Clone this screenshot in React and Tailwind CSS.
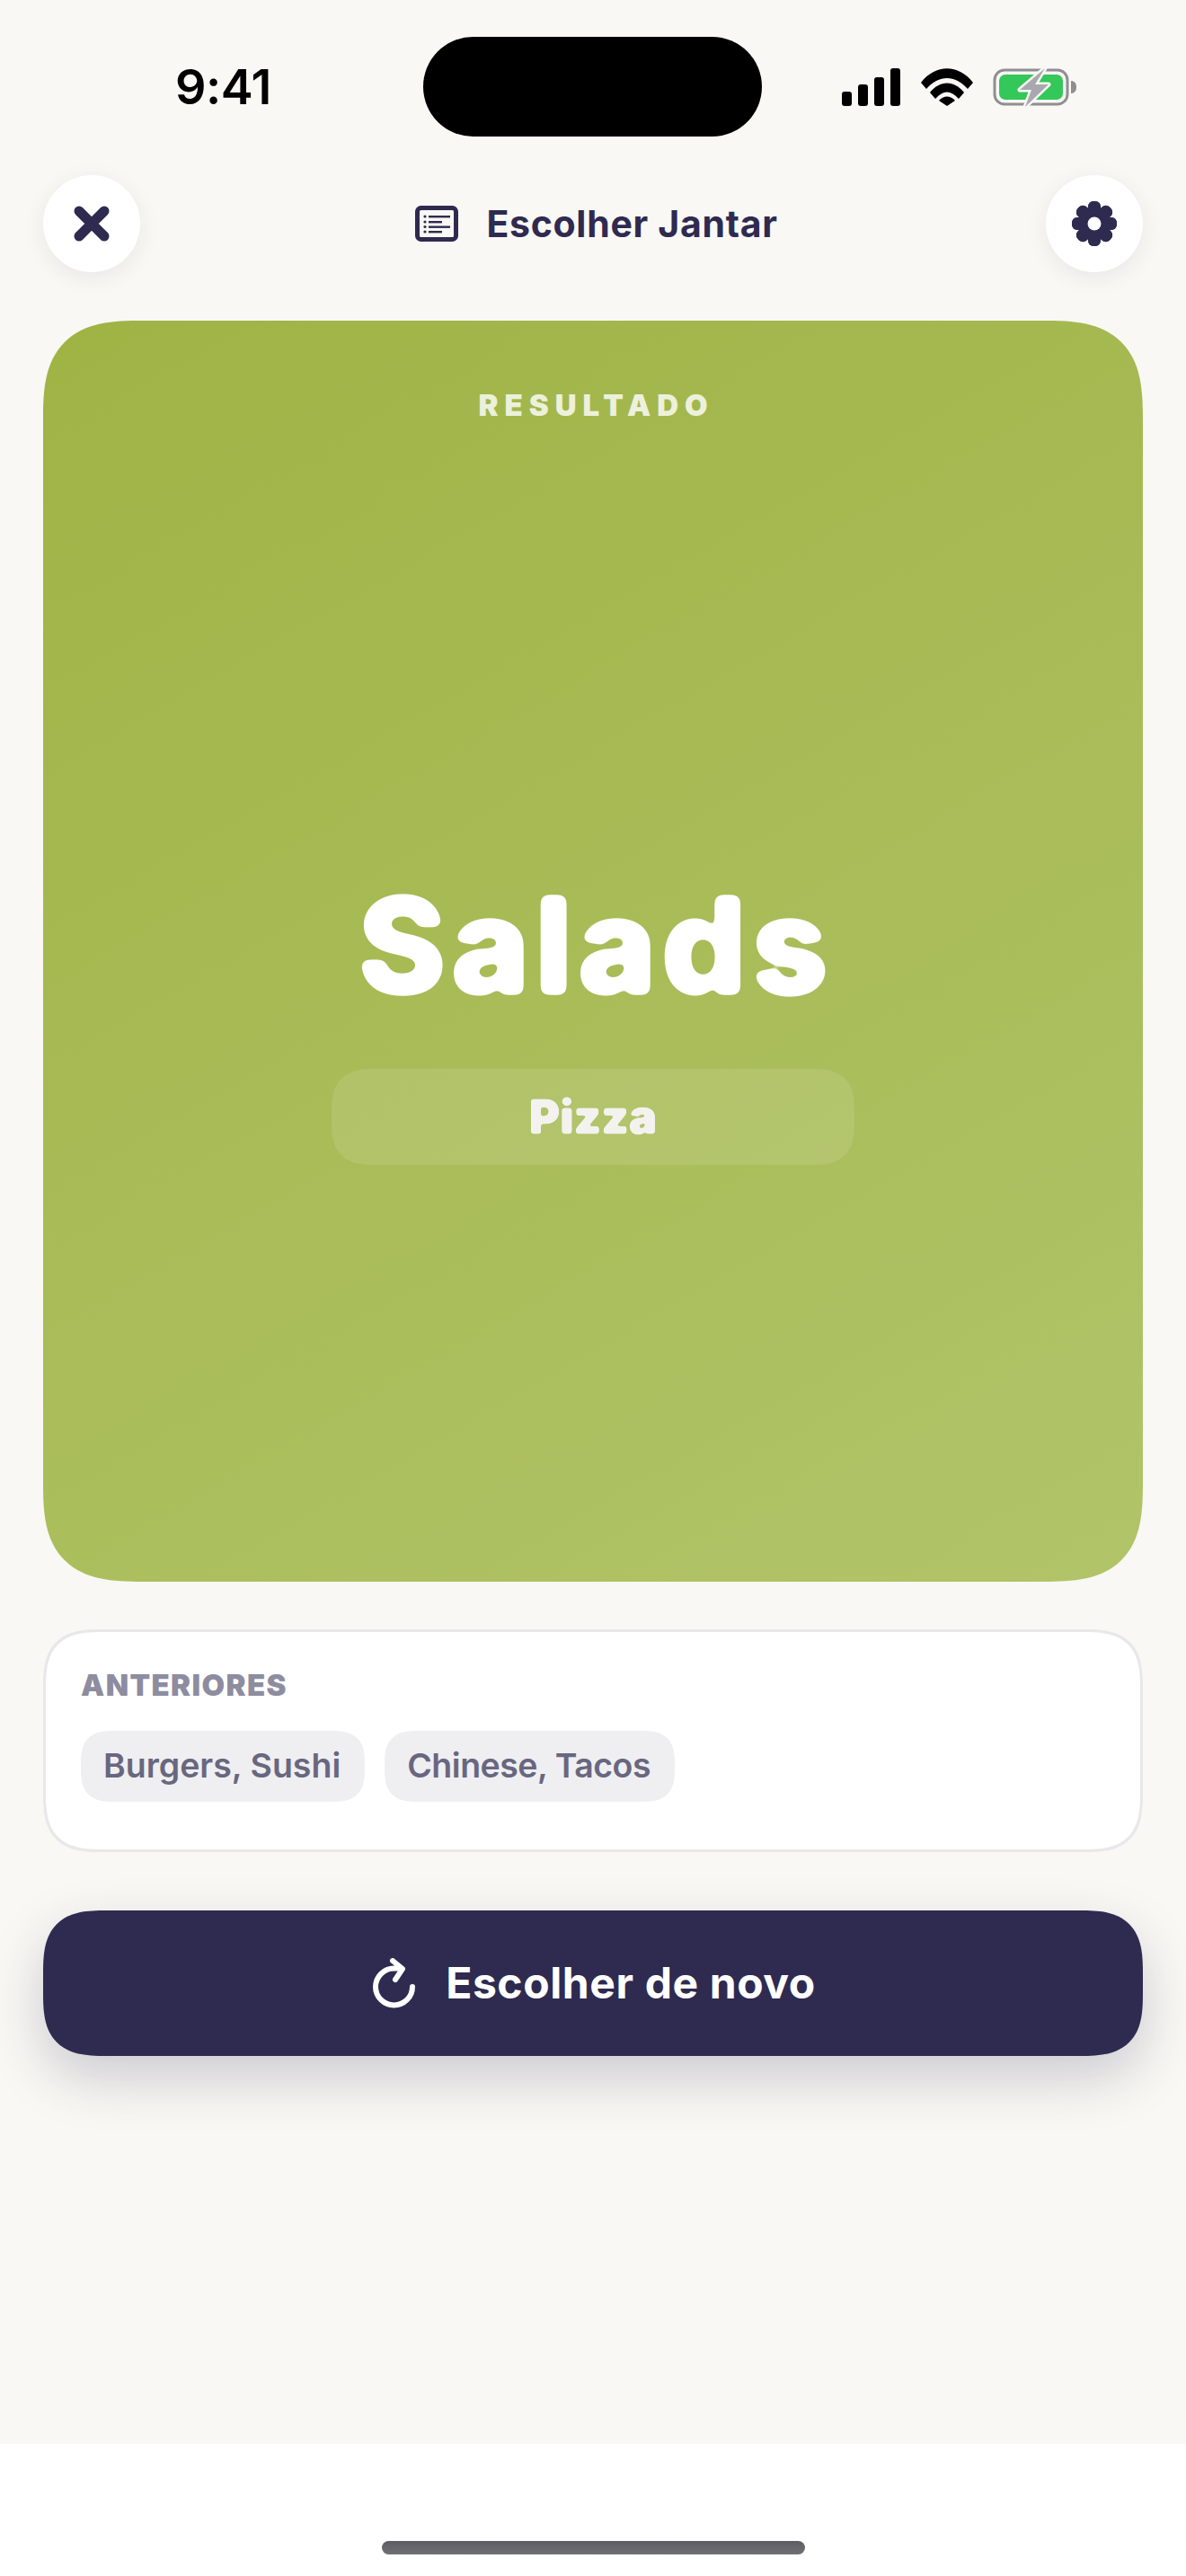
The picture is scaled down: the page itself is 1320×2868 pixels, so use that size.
import React from 'react';

const font = { fontFamily: 'Inter, sans-serif' };

// rounds off the glyph corners of the big headline
function RoundFilters() {
    return (
        <svg className="absolute w-0 h-0">
            <filter id="round-lg" colorInterpolationFilters="sRGB" x="-5%" y="-5%" width="110%" height="110%">
                <feGaussianBlur stdDeviation="4.5" />
                <feComponentTransfer>
                    <feFuncA type="linear" slope="12" intercept="-3.6" />
                </feComponentTransfer>
            </filter>
            <filter id="round-sm" colorInterpolationFilters="sRGB" x="-5%" y="-5%" width="110%" height="110%">
                <feGaussianBlur stdDeviation="1.6" />
                <feComponentTransfer>
                    <feFuncA type="linear" slope="6" intercept="-1.9" />
                </feComponentTransfer>
            </filter>
        </svg>
    );
}

function SignalIcon() {
    return (
        <svg width="66" height="42" viewBox="0 0 66 42" fill="#000">
            <rect x="0" y="26" width="11" height="16" rx="3" />
            <rect x="18" y="18" width="11" height="24" rx="3" />
            <rect x="36" y="10" width="11" height="32" rx="3" />
            <rect x="54" y="0" width="11" height="42" rx="3" />
        </svg>
    );
}

function WifiIcon() {
    return (
        <svg width="58" height="42" viewBox="0 0 58 42" fill="#000">
            <path d="M0 16 C16 -5 42 -5 58 16 L52 23 C38 7 20 7 6 23 Z" />
            <path d="M10 27 C21 13 37 13 48 27 L42 34 C33 24 25 24 16 34 Z" />
            <path d="M20 36 C25 30 33 30 38 36 L29 42 Z" />
        </svg>
    );
}

function BatteryIcon() {
    return (
        <svg width="94" height="44" viewBox="0 0 94 44">
            <rect x="2" y="3" width="81" height="38" rx="11" fill="none" stroke="#8e8e93" strokeWidth="3" />
            <rect x="7" y="8" width="71" height="28" rx="7" fill="#34c759" />
            <path d="M87 15 C91 15 93 18 93 22 C93 26 91 29 87 29 Z" fill="#8e8e93" />
            <path d="M58 1 L30 25 L43 25 L36 44 L62 19 L47 19 Z" fill="#a8a8ae" stroke="#f9f8f4" strokeWidth="5" strokeLinejoin="round" paintOrder="stroke" />
        </svg>
    );
}

function GearIcon() {
    const lobes = [0, 45, 90, 135, 180, 225, 270, 315];
    return (
        <svg width="52" height="52" viewBox="0 0 52 52" fill="#2f2a50">
            {lobes.map(a => (
                <rect key={a} x="19" y="1" width="14" height="50" rx="6" transform={`rotate(${a} 26 26)`} />
            ))}
            <circle cx="26" cy="26" r="18.5" />
            <circle cx="26" cy="26" r="7.5" fill="#fff" />
        </svg>
    );
}

function NewsIcon() {
    return (
        <svg width="48" height="40" viewBox="0 0 48 40" fill="none">
            <rect x="2.5" y="2.5" width="43" height="35" rx="4" stroke="#2f2a50" strokeWidth="5" />
            <g fill="#2f2a50">
                <circle cx="11" cy="12" r="1.6" />
                <circle cx="11" cy="18" r="1.6" />
                <circle cx="11" cy="23.5" r="1.6" />
                <circle cx="11" cy="29" r="1.6" />
                <rect x="15" y="11" width="24" height="2.4" />
                <rect x="15" y="17" width="15" height="2.4" />
                <rect x="15" y="22.5" width="24" height="2.4" />
                <rect x="15" y="28" width="15" height="2.4" />
            </g>
        </svg>
    );
}

function RedoIcon() {
    return (
        <svg width="48" height="56" viewBox="0 0 48 56" fill="none" stroke="#fff" strokeWidth="6" strokeLinecap="round" strokeLinejoin="round">
            <path d="M44 32 A20.5 20.5 0 1 1 23.5 11.5 L31 11.5" />
            <path d="M22 3 L33 12 L25 24" />
        </svg>
    );
}

export default function App() {
    return (
        <div style={font} className="w-[1320px] h-[2868px] flex flex-col bg-white">
            <RoundFilters />
            <div className="flex-1 bg-[#f9f8f4] px-12 pt-[41px]">
                {/* status bar */}
                <div className="-mx-12 h-[111px] flex items-center">
                    <div className="w-[471px] pl-[195px] text-[54px] leading-none font-semibold tracking-[-0.5px] text-black">9:41</div>
                    <div className="w-[377px] h-[111px] rounded-[56px] bg-black" />
                    <div className="flex items-center pl-[89px] gap-[22px]">
                        <SignalIcon />
                        <WifiIcon />
                        <BatteryIcon />
                    </div>
                </div>

                {/* header */}
                <div className="mt-[43px] flex items-center justify-between">
                    <button className="w-[108px] h-[108px] rounded-full bg-white flex items-center justify-center shadow-[0_6px_24px_rgba(47,42,80,0.08)]">
                        <svg width="40" height="40" viewBox="0 0 40 40" stroke="#2f2a50" strokeWidth="11" strokeLinecap="round">
                            <path d="M6 6 L34 34 M34 6 L6 34" />
                        </svg>
                    </button>
                    <div className="pl-[8px] flex items-center gap-[31px] text-[41px] leading-none font-bold tracking-[0.7px] text-[#2f2a50]">
                        <NewsIcon />
                        <span>Escolher Jantar</span>
                    </div>
                    <button className="w-[108px] h-[108px] rounded-full bg-white flex items-center justify-center shadow-[0_6px_24px_rgba(47,42,80,0.08)]">
                        <GearIcon />
                    </button>
                </div>

                {/* result card */}
                <div className="mt-[54px] h-[1404px] rounded-[110px] [corner-shape:superellipse(1.5)] bg-[linear-gradient(150deg,#9fb345,#b1c469)] flex flex-col items-center">
                    <div className="mt-[76px] pl-[7px] text-[33px] leading-[36px] font-black tracking-[7px] text-white/80">RESULTADO</div>
                    <div className="mt-[494px] pl-[6px] text-[148px] leading-[180px] font-extrabold tracking-[6px] text-white [filter:url(#round-lg)]">Salads</div>
                    <div className="mt-[47px] w-[582px] h-[107px] rounded-[50px] [corner-shape:superellipse(1.5)] bg-white/10 flex items-center justify-center">
                        <span className="text-[52px] font-black text-[#f3f2ef] [filter:url(#round-sm)]">Pizza</span>
                    </div>
                </div>

                {/* previous */}
                <div className="mt-[53px] h-[248px] rounded-[66px] [corner-shape:superellipse(1.5)] border-[3px] border-[#e8e8ea] bg-white pl-[39px] pt-[41px]">
                    <div className="text-[33px] leading-[36px] font-black tracking-[1.4px] text-[#8e8c9f]">ANTERIORES</div>
                    <div className="mt-[33px] flex gap-[22px]">
                        <span className="h-[79px] pl-[25px] pr-[27px] rounded-[38px] [corner-shape:superellipse(1.5)] bg-[#efeff1] flex items-center text-[37.5px] font-semibold text-[#69677f]">Burgers, Sushi</span>
                        <span className="h-[79px] pl-[25px] pr-[27px] rounded-[38px] [corner-shape:superellipse(1.5)] bg-[#efeff1] flex items-center text-[37.5px] font-semibold tracking-[-0.5px] text-[#69677f]">Chinese, Tacos</span>
                    </div>
                </div>

                {/* again */}
                <button className="mt-[65px] w-full h-[162px] pl-[3px] rounded-[70px] [corner-shape:superellipse(1.5)] bg-[#2f2a50] flex items-center justify-center gap-[33px] text-[48px] font-bold tracking-[0.6px] text-white shadow-[0_24px_60px_rgba(47,42,80,0.22)]">
                    <RedoIcon />
                    <span>Escolher de novo</span>
                </button>
            </div>

            {/* home indicator */}
            <div className="h-[147px] bg-white flex justify-center pt-[108px]">
                <div className="w-[471px] h-[15px] rounded-full bg-gradient-to-b from-[#5d5c62] to-[#717076]" />
            </div>
        </div>
    );
}
